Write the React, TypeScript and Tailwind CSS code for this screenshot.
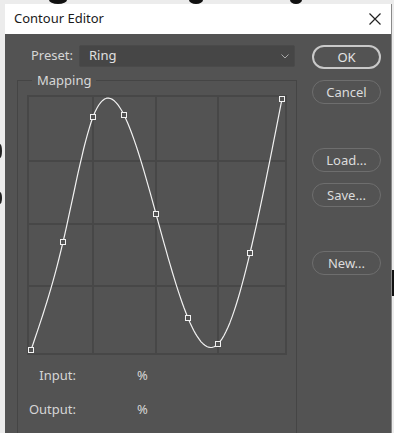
import React from "react";

// control points of the contour, in graph coordinates (0..260)
const knots = [
  { x: 4, y: 255 },
  { x: 36, y: 147 },
  { x: 66, y: 22 },
  { x: 97, y: 20 },
  { x: 129, y: 119 },
  { x: 161, y: 223 },
  { x: 191, y: 249 },
  { x: 223, y: 158 },
  { x: 255, y: 4 },
];

// natural cubic spline y(x), sampled into a polyline
function curvePath(pts: { x: number; y: number }[]) {
  const n = pts.length;
  const h: number[] = [];
  for (let i = 0; i < n - 1; i++) h.push(pts[i + 1].x - pts[i].x);
  const a: number[] = new Array(n).fill(0);
  const b: number[] = new Array(n).fill(1);
  const c: number[] = new Array(n).fill(0);
  const r: number[] = new Array(n).fill(0);
  for (let i = 1; i < n - 1; i++) {
    a[i] = h[i - 1];
    b[i] = 2 * (h[i - 1] + h[i]);
    c[i] = h[i];
    r[i] = 6 * ((pts[i + 1].y - pts[i].y) / h[i] - (pts[i].y - pts[i - 1].y) / h[i - 1]);
  }
  for (let i = 1; i < n; i++) {
    const m = a[i] / b[i - 1];
    b[i] -= m * c[i - 1];
    r[i] -= m * r[i - 1];
  }
  const M: number[] = new Array(n).fill(0);
  M[n - 1] = r[n - 1] / b[n - 1];
  for (let i = n - 2; i >= 0; i--) M[i] = (r[i] - c[i] * M[i + 1]) / b[i];

  let d = "";
  for (let i = 0; i < n - 1; i++) {
    const x0 = pts[i].x;
    const x1 = pts[i + 1].x;
    for (let s = 0; s <= 16; s++) {
      const x = x0 + ((x1 - x0) * s) / 16;
      const A = (x1 - x) / h[i];
      const B = (x - x0) / h[i];
      let y =
        A * pts[i].y +
        B * pts[i + 1].y +
        ((A * A * A - A) * M[i] + (B * B * B - B) * M[i + 1]) * (h[i] * h[i]) / 6;
      y = Math.max(1, Math.min(259, y));
      d += `${d ? " L" : "M"}${x.toFixed(1)},${y.toFixed(1)}`;
    }
  }
  return d;
}

function Graph() {
  return (
    <svg width="260" height="260" viewBox="0 0 260 260" className="block">
      <rect x="1" y="1" width="258" height="258" fill="none" stroke="#474747" strokeWidth="2" />
      {[66, 129, 191].map((v) => (
        <g key={v}>
          <line x1={v} y1="1" x2={v} y2="259" stroke="#474747" strokeWidth="2" />
          <line x1="1" y1={v} x2="259" y2={v} stroke="#474747" strokeWidth="2" />
        </g>
      ))}
      <path d={curvePath(knots)} fill="none" stroke="#f2f2f2" strokeWidth="1.2" strokeLinejoin="round" />
      {knots.map((k, i) => (
        <rect
          key={i}
          x={k.x - 2.5}
          y={k.y - 2.5}
          width="5"
          height="5"
          fill="#535353"
          stroke="#f2f2f2"
          strokeWidth="1"
        />
      ))}
    </svg>
  );
}

function Btn({ label, primary }: { label: string; primary?: boolean }) {
  return (
    <button
      className={
        primary
          ? "w-[69px] h-[24px] rounded-full border-2 border-[#c9c9c9] text-[13px] text-[#e4e4e4] leading-none"
          : "w-[69px] h-[24px] rounded-full border border-[#6e6e6e] text-[13px] text-[#dcdcdc] leading-none"
      }
    >
      {label}
    </button>
  );
}

export default function App() {
  return (
    <div
      className="relative w-[394px] h-[433px] overflow-hidden bg-[#ececec]"
      style={{ fontFamily: '"Noto Sans", "Open Sans", sans-serif' }}
    >
      {/* backdrop behind the dialog */}
      <svg className="absolute inset-0" width="394" height="433">
        <ellipse cx="58" cy="0" rx="9" ry="4" fill="#111" />
        <ellipse cx="196" cy="0" rx="7" ry="4" fill="#111" />
        <ellipse cx="296" cy="0" rx="6" ry="4" fill="#111" />
        <ellipse cx="0" cy="151" rx="2" ry="7" fill="#222" />
        <ellipse cx="0" cy="198" rx="2" ry="6" fill="#222" />
        <rect x="392" y="270" width="2" height="26" fill="#111" />
      </svg>

      <div className="absolute left-[5px] top-[4px] w-[387px] h-[440px] flex flex-col border-r border-[#8a8a8a]">
        {/* title bar */}
        <div className="h-[30px] bg-white flex items-center justify-between pl-[9px] pr-[10px] shrink-0">
          <span className="text-[13px] text-[#1a1a1a]">Contour Editor</span>
          <svg width="12" height="12" viewBox="0 0 12 12">
            <path d="M0.5 0.5 L11.5 11.5 M11.5 0.5 L0.5 11.5" stroke="#222" strokeWidth="1.2" />
          </svg>
        </div>

        {/* body */}
        <div className="flex-1 bg-[#535353] flex pl-[12px] pt-[11px] text-[12px] text-[#d6d6d6]">
          <div className="w-[280px] flex flex-col">
            <div className="flex items-center h-[22px]">
              <span className="w-[56px] text-right text-[13px]">Preset:</span>
              <div className="ml-[6px] w-[216px] h-[22px] bg-[#464646] border border-[#4a4a4a] rounded-[2px] flex items-center justify-between pl-[9px] pr-[5px]">
                <span className="text-[13px] text-[#e0e0e0]">Ring</span>
                <svg width="8" height="5" viewBox="0 0 8 5">
                  <path d="M0.5 0.5 L4 4 L7.5 0.5" fill="none" stroke="#a8a8a8" strokeWidth="1" />
                </svg>
              </div>
            </div>

            <div className="relative mt-[13px] flex-1 border-t border-l border-r border-[#454545] pl-[9px] pt-[14px]">
              <span className="absolute left-[14px] top-[-9px] px-[5px] bg-[#535353] text-[13px] leading-[16px] text-[#d8d8d8]">
                Mapping
              </span>
              <Graph />
              <div className="mt-[13px] flex items-center h-[16px] text-[13px]">
                <span className="w-[49px] text-right">Input:</span>
                <span className="ml-[61px]">%</span>
              </div>
              <div className="mt-[18px] flex items-center h-[16px] text-[13px]">
                <span className="w-[49px] text-right">Output:</span>
                <span className="ml-[61px]">%</span>
              </div>
            </div>
          </div>

          <div className="ml-[15px] flex flex-col">
            <Btn label="OK" primary />
            <div className="mt-[11px]">
              <Btn label="Cancel" />
            </div>
            <div className="mt-[44px]">
              <Btn label="Load..." />
            </div>
            <div className="mt-[11px]">
              <Btn label="Save..." />
            </div>
            <div className="mt-[44px]">
              <Btn label="New..." />
            </div>
          </div>
        </div>
      </div>
    </div>
  );
}
